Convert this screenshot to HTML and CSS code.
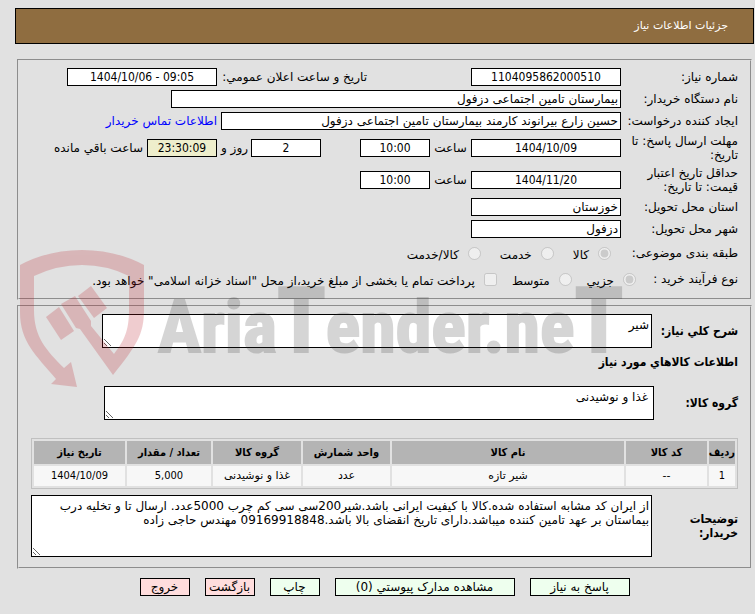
FILE: index.html
```html
<!DOCTYPE html>
<html lang="fa" dir="rtl">
<head>
  <meta charset="UTF-8" />
  <meta name="viewport" content="width=device-width, initial-scale=1.0"/>
  <title>جزئیات اطلاعات نیاز</title>
  <link rel="stylesheet" href="styles.css">
</head>
<body>
  <h1 class="page-title">جزئیات اطلاعات نیاز</h1>

  <form class="need-form">
    <fieldset class="panel">
      <div class="row">
        <label class="name" for="needNo">شماره نیاز:</label>
        <input class="box w150 center" type="text" id="needNo" value="1104095862000510" readonly>
        <label class="announce" for="announceDate">تاریخ و ساعت اعلان عمومي:</label>
        <input class="box w150 center" type="text" id="announceDate" value="1404/10/06 - 09:05" dir="ltr" readonly>
      </div>
      <div class="row">
        <label class="name" for="buyerOrg">نام دستگاه خریدار:</label>
        <input class="box w450" type="text" id="buyerOrg" value="بیمارستان تامین اجتماعی دزفول" readonly>
      </div>
      <div class="row">
        <label class="name" for="creator">ایجاد کننده درخواست:</label>
        <input class="box w400" type="text" id="creator" value="حسین زارع بیرانوند کارمند بیمارستان تامین اجتماعی دزفول" readonly>
        <a class="contact" href="#">اطلاعات تماس خریدار</a>
      </div>
      <div class="row tall">
        <label class="name" for="replyDate">مهلت ارسال پاسخ: تا تاریخ:</label>
        <input class="box w150 center" type="text" id="replyDate" value="1404/10/09" readonly>
        <label class="unit" for="replyTime">ساعت</label>
        <input class="box w70 center" type="text" id="replyTime" value="10:00" readonly>
        <input class="box w70 center days" type="text" id="daysLeft" value="2" readonly>
        <label class="unit-day" for="daysLeft">روز و</label>
        <input class="box w70 center timer" type="text" id="timeLeft" value="23:30:09" readonly>
        <label class="left-label" for="timeLeft">ساعت باقي مانده</label>
      </div>
      <div class="row tall">
        <label class="name" for="validDate">حداقل تاریخ اعتبار قیمت: تا تاریخ:</label>
        <input class="box w150 center" type="text" id="validDate" value="1404/11/20" readonly>
        <label class="unit" for="validTime">ساعت</label>
        <input class="box w70 center" type="text" id="validTime" value="10:00" readonly>
      </div>
      <div class="row">
        <label class="name" for="province">استان محل تحویل:</label>
        <input class="box w150" type="text" id="province" value="خوزستان" readonly>
      </div>
      <div class="row">
        <label class="name" for="city">شهر محل تحویل:</label>
        <input class="box w150" type="text" id="city" value="دزفول" readonly>
      </div>
      <div class="row options category">
        <span class="name">طبقه بندی موضوعی:</span>
        <label><input type="radio" name="category" checked disabled><span>کالا</span></label>
        <label><input type="radio" name="category" disabled><span>خدمت</span></label>
        <label><input type="radio" name="category" disabled><span>کالا/خدمت</span></label>
      </div>
      <div class="row options process">
        <span class="name">نوع فرآیند خرید :</span>
        <label><input type="radio" name="process" checked disabled><span>جزیي</span></label>
        <label><input type="radio" name="process" disabled><span>متوسط</span></label>
        <label><input type="checkbox" disabled><span>پرداخت تمام یا بخشی از مبلغ خرید،از محل "اسناد خزانه اسلامی" خواهد بود.</span></label>
      </div>
    </fieldset>

    <fieldset class="panel goods">
      <div class="area-row">
        <label for="summary">شرح کلي نیاز:</label>
        <textarea class="area w550" id="summary" readonly>شیر</textarea>
      </div>
      <h2 class="section-title">اطلاعات کالاهاي مورد نیاز</h2>
      <div class="area-row group">
        <label for="goodsGroup">گروه کالا:</label>
        <textarea class="area w550" id="goodsGroup" readonly>غذا و نوشیدنی</textarea>
      </div>
      <table class="items">
        <thead>
          <tr>
            <th class="c-row">ردیف</th>
            <th class="c-code">کد کالا</th>
            <th>نام کالا</th>
            <th class="c-unit">واحد شمارش</th>
            <th class="c-group">گروه کالا</th>
            <th class="c-count">تعداد / مقدار</th>
            <th class="c-date">تاریخ نیاز</th>
          </tr>
        </thead>
        <tbody>
          <tr>
            <td class="num">1</td>
            <td>--</td>
            <td>شیر تازه</td>
            <td>عدد</td>
            <td>غذا و نوشیدنی</td>
            <td class="num">5,000</td>
            <td class="num">1404/10/09</td>
          </tr>
        </tbody>
      </table>
      <div class="area-row">
        <label for="notes">توضیحات خریدار:</label>
        <textarea class="area notes" id="notes" readonly>از ایران کد مشابه استفاده شده.کالا با کیفیت ایرانی باشد.شیر200سی سی کم چرب 5000عدد. ارسال تا و تخلیه درب بیماستان بر عهد تامین کننده میباشد.دارای تاریخ انقضای بالا باشد.09169918848 مهندس حاجی زاده</textarea>
      </div>
    </fieldset>

    <div class="actions">
      <button type="button" class="btn w100">پاسخ به نیاز</button>
      <button type="button" class="btn w180">مشاهده مدارک پیوستي (0)</button>
      <button type="button" class="btn w50">چاپ</button>
      <button type="button" class="btn w50 red">بازگشت</button>
      <button type="button" class="btn w50 red">خروج</button>
    </div>
  </form>

  <svg class="watermark" viewBox="20 250 620 140" width="620" height="140" aria-hidden="true">
    <g class="shield">
      <path d="M20 265Q48 250 82 250Q116 250 144 265V310C144 335 136 346 113 375L80 329L76 328L61 304L75 296L91 321L91 326L114 354C124 341 129 331 129 310V276Q107 265 82 265Q57 265 34 276V310C34 337 46 350 64 368L71 362L77 387L51 384L56 379C36 355 20 342 20 312Z"/>
      <path d="M46 317L59 307L74 331L61 340Z"/>
      <path d="M78 296L91 286L107 308L94 318Z"/>
    </g>
    <text x="158" y="352" class="brand">Aria<tspan class="big">T</tspan>ender.ne<tspan class="big">T</tspan></text>
  </svg>
</body>
</html>
```
FILE: styles.css
```css
* {
  box-sizing: border-box;
}

body {
  margin: 0;
  padding: 8px 1px 8px 15px;
  position: relative;
  background: #e1e1e1;
  color: #000;
  font-family: "DejaVu Sans", Tahoma, sans-serif;
  font-size: 12px;
  line-height: 14px;
}

input, textarea, button {
  font-family: inherit;
  font-size: 12px;
}

.page-title {
  margin: 0 0 15px;
  padding: 10px 25px;
  border: 1px solid #000;
  background: #8f6d40;
  color: #fff;
  font-size: 11px;
  font-weight: normal;
}

.need-form {
  padding: 0 2px;
}

.panel {
  margin: 0 0 5px;
  padding: 5px 12px 6px;
  border: 2px groove #e1e1e1;
  min-width: 0;
}

.row {
  display: flex;
  align-items: center;
  min-height: 22px;
}

.row.tall {
  min-height: 32px;
}

.name {
  flex: none;
  width: 117px;
  padding-left: 4px;
}

.box {
  flex: none;
  height: 18px;
  padding: 0 2px;
  border: 1px solid #000;
  border-radius: 0;
  background: #fff;
  color: #000;
}

.center,
.num {
  font-family: "DejaVu Sans Condensed", Tahoma, sans-serif;
  text-align: center;
}

.w70 { width: 70px; }
.w150 { width: 150px; }
.w400 { width: 400px; }
.w450 { width: 450px; }

.announce {
  width: 150px;
  margin-right: 104px;
  white-space: nowrap;
}

.contact {
  margin-right: 4px;
  color: #00f;
  text-decoration: none;
}

.unit {
  width: 41px;
  text-align: center;
}

.days {
  margin-right: 39px;
}

.unit-day {
  width: 34px;
  padding-right: 3px;
  white-space: nowrap;
}

.timer {
  background: #eec;
}

.left-label {
  margin-right: 4px;
}

.options {
  min-height: 26px;
}

.options label {
  display: flex;
  align-items: center;
  gap: 9px;
  margin-left: 19px;
  white-space: nowrap;
}

.options label span {
  padding-top: 4px;
}

.options input {
  margin: 0;
}

.category .name {
  width: 127px;
}

.process .name {
  width: 102px;
}

.process label {
  margin-left: 15px;
}

.process label:last-child {
  margin-left: 0;
}

.goods {
  padding: 7px 12px 10px;
}

.area-row {
  display: flex;
  align-items: center;
  font-weight: bold;
}

.area-row label {
  flex: none;
  width: 86px;
  font-family: "DejaVu Sans Condensed", Tahoma, sans-serif;
}

.area-row.group label {
  width: 84px;
}

.area {
  height: 34px;
  padding: 3px 2px;
  border: 1px solid #000;
  border-radius: 0;
  background: #fff;
  color: #000;
  line-height: 14px;
  overflow: hidden;
}

.w550 { width: 550px; }

.section-title {
  margin: 7px 0 17px;
  font-family: "DejaVu Sans Condensed", Tahoma, sans-serif;
  font-size: 12px;
  line-height: 14px;
}

.group .area {
  padding-right: 5px;
}

.items {
  width: 100%;
  margin: 18px 0 6px;
  border: 1px solid #c0c0c0;
  border-spacing: 2px;
  table-layout: fixed;
  font-size: 11px;
  text-align: center;
}

.items th,
.items td {
  padding: 0;
  white-space: nowrap;
}

.items th {
  height: 23px;
  background: #b4b4b4;
  font-family: "DejaVu Sans Condensed", Tahoma, sans-serif;
}

.items td {
  height: 20px;
  background: #f7f7f7;
}

.c-row { width: 26px; }
.c-code { width: 81px; }
.c-unit { width: 87px; }
.c-group { width: 88px; }
.c-count { width: 84px; }
.c-date { width: 91px; }

.notes {
  flex: 1;
  height: 62px;
}

.actions {
  display: flex;
  justify-content: center;
  gap: 15px;
  padding-top: 4px;
}

.btn {
  height: 18px;
  padding: 0;
  border: 1px solid #000;
  background: #efe;
  color: #000;
  line-height: 14px;
  white-space: nowrap;
  cursor: pointer;
}

.btn.red {
  background: #fdd;
}

.w50 { width: 50px; }
.w100 { width: 100px; }
.w180 { width: 180px; }

/* watermark lies over the form and lets clicks through */
.watermark {
  position: absolute;
  left: 20px;
  top: 250px;
  direction: ltr;
  pointer-events: none;
}

.shield {
  fill: #b91e28;
  opacity: 0.22;
}

.brand {
  fill: #323232;
  stroke: #323232;
  stroke-width: 2;
  opacity: 0.2;
  font-family: "Liberation Sans Narrow", "Roboto Condensed", Roboto, sans-serif;
  font-size: 72px;
  font-weight: bold;
}

.big {
  font-size: 90px;
}
```
